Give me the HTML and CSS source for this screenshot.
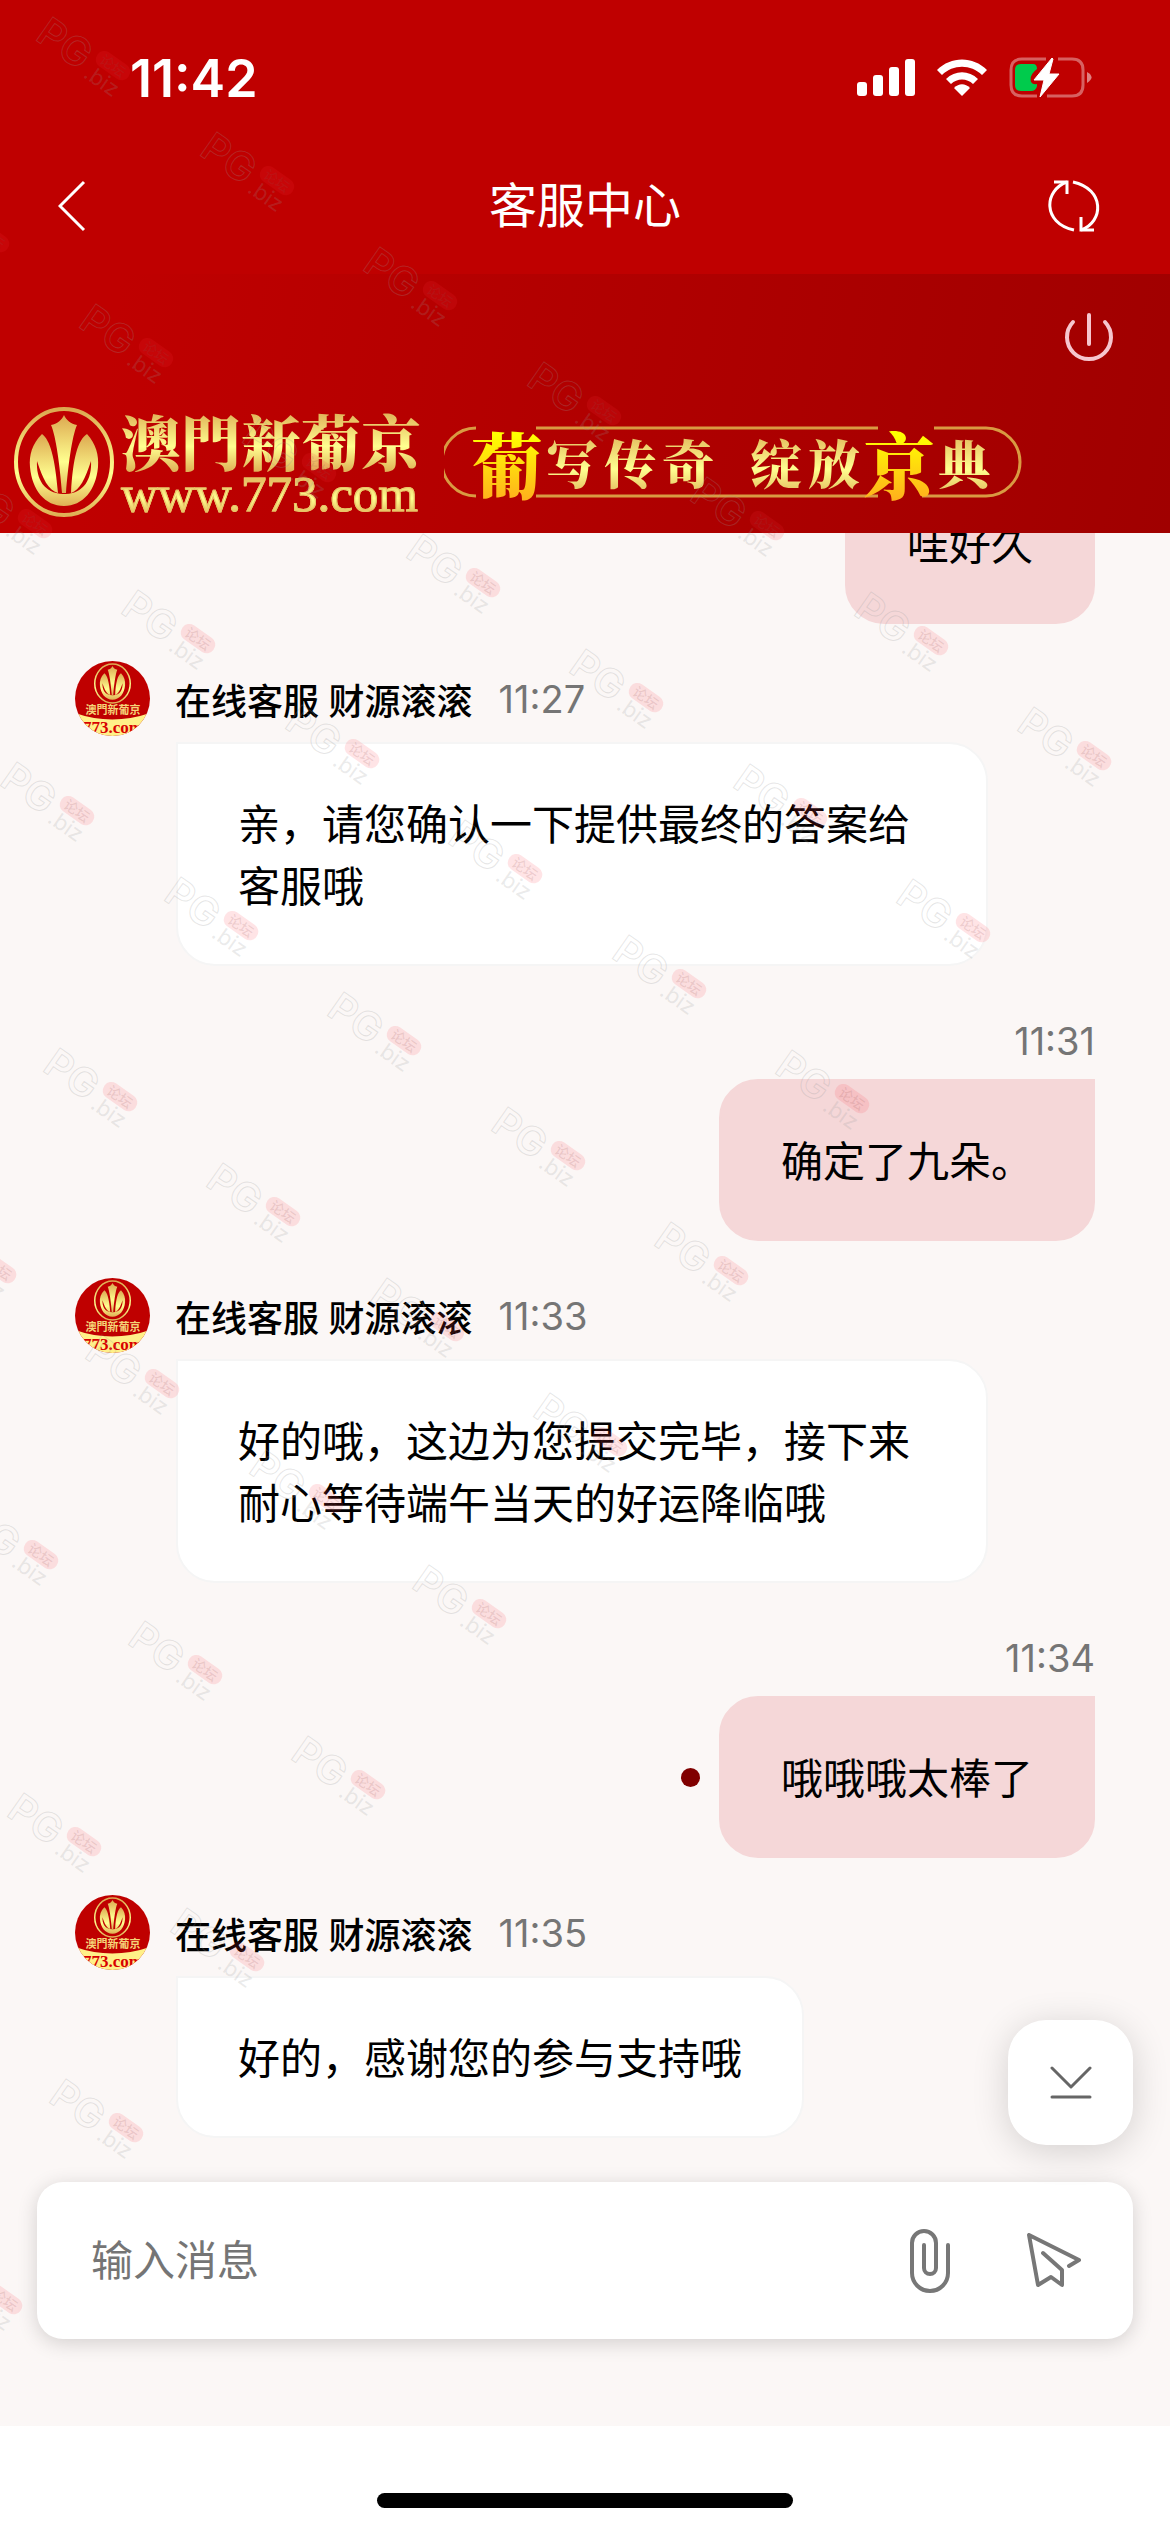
FILE: index.html
```
<!DOCTYPE html>
<html lang="zh-CN">
<head>
    <meta charset="UTF-8">
    <meta name="viewport" content="width=device-width, initial-scale=1.0">
    <title>客服中心</title>
    <link rel="stylesheet" href="styles.css">
</head>
<body>
    <!-- 公用图形 -->
    <svg class="defs" aria-hidden="true">
        <defs>
            <linearGradient id="gold" x1="0" y1="0" x2="0" y2="1">
                <stop offset="0" stop-color="#dca850"/>
                <stop offset="0.6" stop-color="#ffff90"/>
                <stop offset="1" stop-color="#dfb055"/>
            </linearGradient>
            <symbol id="lotus" viewBox="0 0 100 110">
                <ellipse cx="50" cy="55" rx="48" ry="53" fill="none" stroke="url(#gold)" stroke-width="4"/>
                <path fill="url(#gold)" d="M50 8 C52 13 57 17 63 18 C58 29 54 60 52 86 H48 C46 60 42 29 37 18 C43 17 48 13 50 8Z"/>
                <path fill="url(#gold)" d="M28 27 C36 33 41 50 44 86 C34 83 29 72 23 54 C22 72 30 86 49 87 H52 C70 86 78 72 77 54 C71 72 66 83 57 86 C59 50 64 33 73 27 C82 37 85 48 84 60 C82 83 69 99 50 99 C31 99 18 83 16 60 C15 48 18 37 28 27Z"/>
            </symbol>
            <symbol id="avatar" viewBox="0 0 75 75">
                <rect width="75" height="75" fill="#bf0000"/>
                <use href="#lotus" x="19" y="2" width="37" height="41"/>
                <text x="38" y="53" class="avatar-name" text-anchor="middle">澳門新葡京</text>
                <path d="M0 52 Q37 65 75 52 V75 H0Z" fill="#fff088"/>
                <text x="38" y="72" class="avatar-site" text-anchor="middle">773.com</text>
            </symbol>
            <symbol id="mark" overflow="visible">
                <g transform="rotate(35)">
                    <text class="mark-pg" x="0" y="0">PG</text>
                    <rect class="mark-pill" x="61" y="-32" width="38" height="17" rx="8"/>
                    <text class="mark-cn" x="66" y="-18">论坛</text>
                    <text class="mark-biz" x="61" y="3">.biz</text>
                </g>
            </symbol>
        </defs>
    </svg>

    <header class="top">
        <div class="status">
            <span class="clock">11:42</span>
            <div class="status-icons">
                <svg width="58" height="38" viewBox="0 0 58 38" fill="#fff">
                    <rect x="0" y="23" width="10" height="14" rx="3"/>
                    <rect x="16" y="16" width="10" height="21" rx="3"/>
                    <rect x="32" y="8" width="10" height="29" rx="3"/>
                    <rect x="48" y="0" width="10" height="37" rx="3"/>
                </svg>
                <svg width="52" height="38" viewBox="0 0 52 38" fill="#fff">
                    <path d="M1 11 C15 -3 37 -3 51 11 L46 16 C35 5 17 5 6 16Z"/>
                    <path d="M10 20 C19 11 33 11 42 20 L37 25 C31 19 21 19 15 25Z"/>
                    <path d="M18 29 C23 24 29 24 34 29 L26 37Z"/>
                </svg>
                <svg width="83" height="42" viewBox="0 0 83 42">
                    <path d="M37 2 H13 Q2 2 2 13 V28 Q2 39 13 39 H28 M49 2 H63 Q74 2 74 13 V28 Q74 39 63 39 H38" fill="none" stroke="#fff" stroke-opacity=".38" stroke-width="3"/>
                    <path d="M78 15 Q87 20 78 26Z" fill="#fff" fill-opacity=".5"/>
                    <path d="M12 7 H24 Q28 7 28 12 Q20 18 22 25 Q24 28 28 27 V29 Q27 34 22 34 H12 Q6 34 6 28 V13 Q6 7 12 7Z" fill="#00cb4c"/>
                    <path d="M43 1 L25 23 H35 L31 40 L50 17 H40 L44 2Z" fill="#fff" stroke="#fff" stroke-linejoin="round"/>
                </svg>
            </div>
        </div>
        <nav class="nav">
            <a class="nav-btn" href="#" aria-label="返回">
                <svg width="28" height="52" viewBox="0 0 28 52"><path d="M26 2 L2 26 L26 50" fill="none" stroke="#fff" stroke-width="3"/></svg>
            </a>
            <h1>客服中心</h1>
            <button class="nav-btn" type="button" aria-label="刷新">
                <svg width="52" height="52" viewBox="0 0 52 52" fill="none" stroke="#fff" stroke-width="3">
                    <path d="M19 2 C-4 10 -6 43 26 50"/>
                    <path d="M6 2 H19 V14"/>
                    <path d="M25 2 C57 9 56 42 33 50"/>
                    <path d="M33 37 V50 H46"/>
                </svg>
            </button>
        </nav>
    </header>

    <section class="banner">
        <button class="power" type="button" aria-label="退出">
            <svg width="50" height="50" viewBox="0 0 50 50" fill="none" stroke="#f6c6ce" stroke-width="4" stroke-linecap="round">
                <path d="M25 3 V32"/>
                <path d="M9 10 A22 22 0 1 0 41 10"/>
            </svg>
        </button>
        <div class="brand">
            <svg class="brand-logo" width="100" height="110"><use href="#lotus"/></svg>
            <div class="brand-text">
                <strong class="brand-name">澳門新葡京</strong>
                <span class="brand-site">www.773.com</span>
            </div>
            <div class="slogan">
                <svg class="slogan-line" viewBox="0 0 578 72" fill="none" stroke="#d99a42" stroke-width="3">
                    <path d="M32 70 A34 34 0 0 1 32 2 M92 2 H434 M490 2 H542 A34 34 0 0 1 542 70 H478 M434 70 H92"/>
                </svg>
                <span class="big">葡</span>
                <span>写</span><span>传</span><span class="pause">奇</span>
                <span>绽</span><span>放</span>
                <span class="big">京</span>
                <span>典</span>
            </div>
        </div>
    </section>

    <main class="chat">
        <article class="msg mine">
            <time>11:26</time>
            <div class="bubble">哇好久</div>
        </article>
        <article class="msg">
            <div class="who">
                <svg class="avatar" width="75" height="75"><use href="#avatar"/></svg>
                <b>在线客服 财源滚滚</b>
                <time>11:27</time>
            </div>
            <div class="bubble">亲，请您确认一下提供最终的答案给客服哦</div>
        </article>
        <article class="msg mine">
            <time>11:31</time>
            <div class="bubble">确定了九朵。</div>
        </article>
        <article class="msg">
            <div class="who">
                <svg class="avatar" width="75" height="75"><use href="#avatar"/></svg>
                <b>在线客服 财源滚滚</b>
                <time>11:33</time>
            </div>
            <div class="bubble">好的哦，这边为您提交完毕，接下来耐心等待端午当天的好运降临哦</div>
        </article>
        <article class="msg mine">
            <time>11:34</time>
            <div class="line">
                <i class="dot"></i>
                <div class="bubble">哦哦哦太棒了</div>
            </div>
        </article>
        <article class="msg">
            <div class="who">
                <svg class="avatar" width="75" height="75"><use href="#avatar"/></svg>
                <b>在线客服 财源滚滚</b>
                <time>11:35</time>
            </div>
            <div class="bubble">好的，感谢您的参与支持哦</div>
        </article>
    </main>

    <form class="composer">
        <button class="to-bottom" type="button" aria-label="回到底部">
            <svg width="42" height="36" viewBox="0 0 42 36" fill="none" stroke="#666" stroke-width="3" stroke-linecap="round" stroke-linejoin="round">
                <path d="M2 3 L21 22 L40 3"/>
                <path d="M2 32 H40"/>
            </svg>
        </button>
        <input type="text" placeholder="输入消息" aria-label="输入消息">
        <button type="button" aria-label="附件">
            <svg width="42" height="64" viewBox="0 0 42 64" fill="none" stroke="#777" stroke-width="4" stroke-linecap="round">
                <path d="M39 16 V44 A18 18 0 0 1 3 44 V14 A12 12 0 0 1 27 14 V39 A6 6 0 0 1 15 39 V16"/>
            </svg>
        </button>
        <button type="submit" aria-label="发送">
            <svg width="54" height="56" viewBox="0 0 54 56" fill="none" stroke="#777" stroke-width="4" stroke-linecap="round" stroke-linejoin="round">
                <path d="M42 33 L52 27 L2 2 L11 52 L24 44 L35 52 V37 L16 20"/>
            </svg>
        </button>
    </form>

    <footer class="home"><span class="home-bar"></span></footer>

    <svg class="marks" id="marks" aria-hidden="true"></svg>

    <script>
        // 水印：按斜向网格铺开，每行递减
        var marks = '';
        for (var row = 0; row < 10; row++) {
            for (var col = -3; col <= 6 - row; col++) {
                var x = Math.round(34 + row * 42.5 + col * 163.5);
                var y = Math.round(39 + row * 286.5 + col * 115);
                if (x > -100 && y > 0) {
                    marks += '<use href="#mark" x="' + x + '" y="' + y + '"/>';
                }
            }
        }
        document.getElementById('marks').innerHTML = marks;

        document.querySelector('.composer').addEventListener('submit', function (e) {
            e.preventDefault();
        });
    </script>
</body>
</html>
```
FILE: styles.css
```
/* 基础样式 */
* {
    box-sizing: border-box;
}

body {
    margin: 0;
    height: 100vh;
    display: flex;
    flex-direction: column;
    position: relative;
    overflow: hidden;
    background: #fbf7f6;
    color: #000;
    font-family: Inter, "Noto Sans CJK SC", sans-serif;
    font-size: 42px;
}

button {
    padding: 0;
    border: none;
    background: none;
    cursor: pointer;
}

svg {
    display: block;
    flex: none;
}

.defs {
    position: absolute;
    width: 0;
    height: 0;
}

/* 顶部 */
.top {
    flex: none;
    padding-bottom: 18px;
    background: #bf0000;
    color: #fff;
}

.status {
    height: 156px;
    padding: 0 78px 0 130px;
    display: flex;
    align-items: center;
    justify-content: space-between;
}

.clock {
    font-size: 52px;
    font-weight: 600;
}

.status-icons {
    display: flex;
    align-items: center;
    gap: 21px;
}

.nav {
    height: 100px;
    padding: 0 70px;
    display: flex;
    align-items: center;
    justify-content: space-between;
}

.nav-btn {
    width: 52px;
}

.nav a {
    margin-left: -12px;
    margin-right: 12px;
}

.nav h1 {
    margin: 0;
    font-size: 48px;
    font-weight: 400;
    line-height: 60px;
}

/* 横幅 */
.banner {
    flex: none;
    height: 259px;
    padding: 38px 56px 16px 14px;
    display: flex;
    flex-direction: column;
    justify-content: space-between;
    background: linear-gradient(100deg, #bf0000 10%, #b10000 50%, #a00000);
}

.power {
    align-self: flex-end;
}

.brand {
    display: flex;
    align-items: center;
    gap: 7px;
}

.brand-text {
    display: flex;
    flex-direction: column;
}

.brand-name,
.brand-site,
.slogan span {
    background: linear-gradient(#dca850, #ffff90 60%, #dfb055);
    -webkit-background-clip: text;
    background-clip: text;
    color: transparent;
}

.brand-name {
    font-family: "Noto Serif CJK TC", "Noto Sans CJK TC", serif;
    font-size: 60px;
    font-weight: 900;
    line-height: 64px;
}

.brand-site {
    font-family: "Liberation Serif", serif;
    font-size: 51px;
    line-height: 44px;
    -webkit-text-stroke: 1px #e8c468;
}

.slogan {
    position: relative;
    display: flex;
    align-items: center;
    gap: 6px;
    width: 578px;
    height: 72px;
    margin-left: 16px;
    padding-left: 30px;
    font-family: "Noto Serif CJK SC", "Noto Sans CJK SC", serif;
    font-size: 52px;
    font-weight: 900;
    line-height: 72px;
}

.slogan-line {
    position: absolute;
    left: 0;
    top: 0;
    width: 100%;
}

.slogan span {
    position: relative;
}

.slogan .pause {
    margin-right: 30px;
}

.slogan .big {
    font-size: 72px;
    line-height: 90px;
    margin: 0 -3px;
    background-image: linear-gradient(#ffff00 20%, #ffa820);
}

/* 聊天记录 */
.chat {
    flex: 1;
    min-height: 0;
    padding: 0 75px 44px;
    display: flex;
    flex-direction: column;
    justify-content: flex-end;
    gap: 37px;
    overflow: hidden;
}

.msg {
    flex: none;
    display: flex;
    flex-direction: column;
    align-items: flex-start;
}

.msg time {
    color: #757575;
    font-size: 38px;
}

.who {
    height: 81px;
    padding-bottom: 6px;
    display: flex;
    align-items: center;
    font-size: 36px;
}

.who b {
    margin: 0 26px 0 25px;
    font-weight: 500;
}

.avatar {
    border-radius: 50%;
}

.avatar-name {
    font: 700 11px "Noto Sans CJK TC", sans-serif;
    fill: #f5d478;
}

.avatar-site {
    font: 700 17px "Liberation Serif", serif;
    fill: #d80000;
}

.bubble {
    max-width: 812px;
    margin-left: 101px;
    padding: 50px 60px 46px;
    border: 2px solid #f5f5f5;
    border-radius: 0 39px 39px 39px;
    background: #fff;
    line-height: 62px;
}

.mine {
    align-items: flex-end;
}

.mine time {
    line-height: 76px;
}

.mine .bubble {
    margin-left: 0;
    border-color: #f5d7d8;
    border-radius: 39px 0 39px 39px;
    background: #f5d7d8;
}

.line {
    display: flex;
    align-items: center;
    gap: 19px;
}

.dot {
    width: 19px;
    height: 19px;
    border-radius: 50%;
    background: #800000;
}

/* 输入栏 */
.composer {
    flex: none;
    position: relative;
    height: 157px;
    margin: 0 37px 87px;
    padding: 0 52px 0 54px;
    display: flex;
    align-items: center;
    gap: 76px;
    border-radius: 26px;
    background: #fff;
    box-shadow: 0 4px 20px rgba(0, 0, 0, 0.16);
}

.composer input {
    flex: 1;
    min-width: 0;
    padding: 0;
    border: none;
    outline: none;
    background: none;
    font: inherit;
}

.composer input::placeholder {
    color: #757575;
    opacity: 1;
}

.to-bottom {
    position: absolute;
    right: 0;
    bottom: 194px;
    width: 125px;
    height: 125px;
    display: flex;
    align-items: center;
    justify-content: center;
    border-radius: 38px;
    background: #fff;
    box-shadow: 0 6px 36px rgba(0, 0, 0, 0.16);
}

.home {
    flex: none;
    height: 106px;
    padding-bottom: 24px;
    display: flex;
    align-items: flex-end;
    justify-content: center;
    background: #fff;
}

.home-bar {
    width: 416px;
    height: 15px;
    border-radius: 8px;
    background: #000;
}

/* 水印 */
.marks {
    position: absolute;
    left: 0;
    top: 0;
    width: 100%;
    height: 100%;
    pointer-events: none;
}

.mark-pg {
    font: 600 40px Inter, sans-serif;
    fill: none;
    stroke: #999;
    stroke-opacity: 0.25;
}

.mark-pill {
    fill: #ff3040;
    fill-opacity: 0.13;
}

.mark-cn {
    font: 500 14px "Noto Sans CJK SC", sans-serif;
    fill: #905050;
    fill-opacity: 0.16;
}

.mark-biz {
    font: 400 22px Inter, sans-serif;
    fill: #999;
    fill-opacity: 0.2;
}
```
